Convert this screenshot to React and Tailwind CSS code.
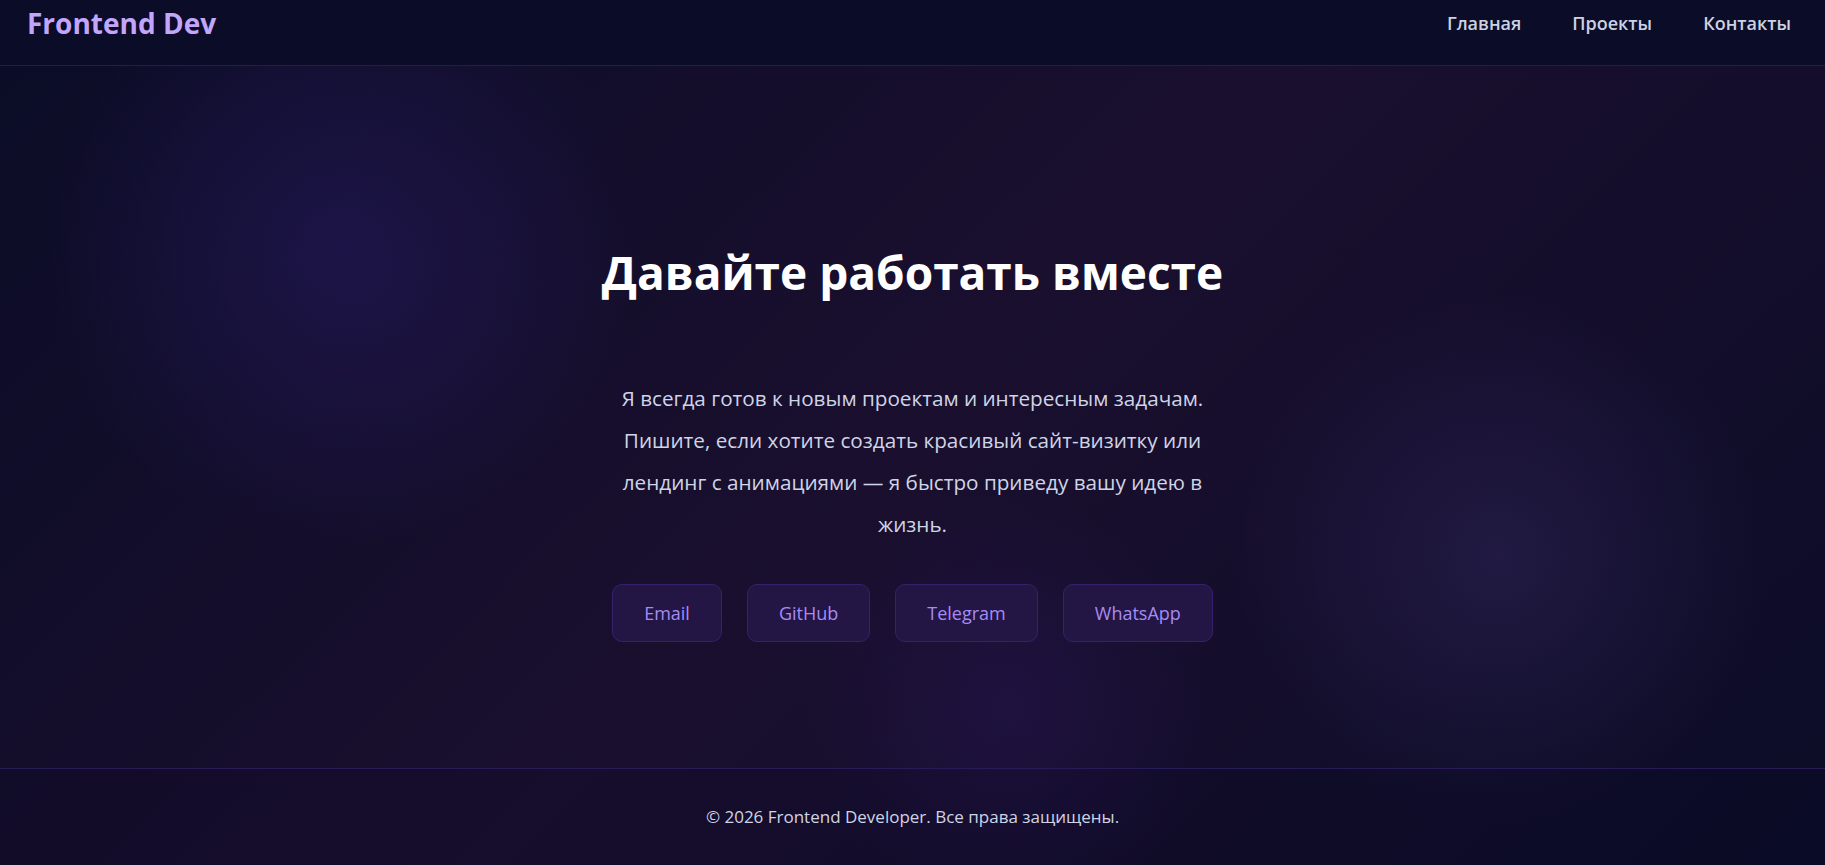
export default function App() {
  const links = ["Email", "GitHub", "Telegram", "WhatsApp"];
  return (
    <div className="relative min-h-screen overflow-hidden bg-[linear-gradient(135deg,#0a0c26_0%,#1a0f2e_50%,#0b0c27_100%)] font-['Open_Sans',sans-serif] text-[#cfd4e6]">
      <div className="pointer-events-none absolute left-[40px] top-[-50px] h-[600px] w-[600px] rounded-full bg-[radial-gradient(circle,rgba(75,50,190,0.2)_0%,rgba(75,50,190,0.08)_45%,transparent_70%)]" />
      <div className="pointer-events-none absolute left-[1230px] top-[290px] h-[540px] w-[540px] rounded-full bg-[radial-gradient(circle,rgba(110,90,190,0.16)_0%,rgba(110,90,190,0.06)_45%,transparent_70%)]" />
      <div className="pointer-events-none absolute left-[800px] top-[500px] h-[420px] w-[420px] rounded-full bg-[radial-gradient(circle,rgba(90,40,180,0.14)_0%,rgba(90,40,180,0.05)_45%,transparent_70%)]" />

      <header className="relative z-10 flex h-[66px] items-start justify-between border-b border-[#271a58] bg-[#0b0c27] pl-[27px] pr-[34px]">
        <div className="text-[28px] font-bold leading-[46px] text-[#c2a6fb]">Frontend Dev</div>
        <nav className="flex gap-[51px] text-[18px] font-semibold leading-[46px] text-[#cbd2e2]">
          <a>Главная</a>
          <a>Проекты</a>
          <a>Контакты</a>
        </nav>
      </header>

      <main className="relative z-10 flex h-[702px] flex-col items-center pt-[177px]">
        <h1 className="text-[46px] font-bold leading-[58px] text-white">Давайте работать вместе</h1>
        <p className="mt-[76px] max-w-[586px] text-center text-[20.7px] leading-[42px] text-[#cfd4e6]">
          Я всегда готов к новым проектам и интересным задачам. Пишите, если хотите создать красивый сайт-визитку или лендинг с анимациями — я быстро приведу вашу идею в жизнь.
        </p>
        <div className="mt-[39px] flex gap-[25px]">
          {links.map((l) => (
            <a
              key={l}
              className="flex h-[58px] items-center rounded-[10px] border border-[#35226a] bg-[#231544] px-[31px] text-[18px] text-[#a58cf5]"
            >
              {l}
            </a>
          ))}
        </div>
      </main>

      <footer className="relative z-10 flex h-[97px] items-center justify-center border-t border-[#281b58] bg-[rgba(10,10,35,0.15)]">
        <p className="text-[17px] text-[#cfd4e6]">© 2026 Frontend Developer. Все права защищены.</p>
      </footer>
    </div>
  );
}
